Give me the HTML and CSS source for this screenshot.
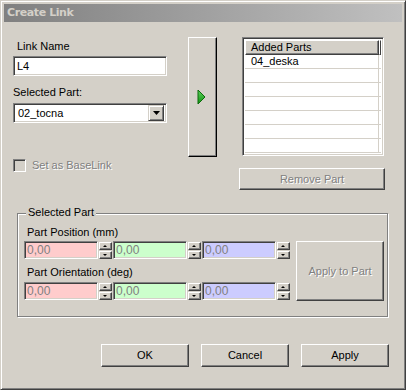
FILE: index.html
```html
<!DOCTYPE html>
<html>
<head>
  <meta charset="UTF-8">
  <title>Create Link</title>
  <link rel="stylesheet" href="styles.css">
</head>
<body>
  <div class="window">
    <div class="titlebar">Create Link</div>

    <div class="client">
      <!-- Link name, part picker, add button and list -->
      <div class="top">
        <div class="left-col">
          <div class="lbl name-lbl">Link Name</div>
          <div class="edit">L4</div>
          <div class="lbl part-lbl">Selected Part:</div>
          <div class="combo">
            <span class="combo-text">02_tocna</span>
            <span class="combo-btn">
              <svg width="7" height="4" viewBox="0 0 7 4"><polygon points="0,0 7,0 3.5,4" fill="#000"/></svg>
            </span>
          </div>
        </div>

        <button class="btn add-btn">
          <svg width="9" height="16" viewBox="0 0 9 16">
            <defs>
              <linearGradient id="g" x1="0" y1="0" x2="0" y2="1">
                <stop offset="0" stop-color="#5ed45e"/>
                <stop offset="1" stop-color="#109010"/>
              </linearGradient>
            </defs>
            <polygon points="1,1 8,8 1,15" fill="url(#g)" stroke="#0a6a0a" stroke-width="1"/>
          </svg>
        </button>

        <div class="list">
          <div class="list-head">
            <span class="head-cell">Added Parts</span>
            <span class="head-stub"></span>
          </div>
          <div class="row"><span class="cell">04_deska</span><span class="cell-end"></span></div>
          <div class="row"><span class="cell"></span><span class="cell-end"></span></div>
          <div class="row"><span class="cell"></span><span class="cell-end"></span></div>
          <div class="row"><span class="cell"></span><span class="cell-end"></span></div>
          <div class="row"><span class="cell"></span><span class="cell-end"></span></div>
          <div class="row"><span class="cell"></span><span class="cell-end"></span></div>
          <div class="row"><span class="cell"></span><span class="cell-end"></span></div>
        </div>
      </div>

      <!-- Base link checkbox and remove button -->
      <div class="mid">
        <div class="check">
          <span class="check-box"></span>
          <span class="disabled">Set as BaseLink</span>
        </div>
        <button class="btn remove-btn disabled">Remove Part</button>
      </div>

      <!-- Selected part group -->
      <div class="group">
        <div class="legend">Selected Part</div>
        <div class="group-grid">
          <div class="lbl pos-lbl">Part Position (mm)</div>
          <div class="fields pos-fields">
            <span class="num pink">0,00</span><span class="spin"><span class="up"></span><span class="down"></span></span>
            <span class="num green">0,00</span><span class="spin"><span class="up"></span><span class="down"></span></span>
            <span class="num blue">0,00</span><span class="spin"><span class="up"></span><span class="down"></span></span>
          </div>
          <div class="lbl ori-lbl">Part Orientation (deg)</div>
          <div class="fields ori-fields">
            <span class="num pink">0,00</span><span class="spin"><span class="up"></span><span class="down"></span></span>
            <span class="num green">0,00</span><span class="spin"><span class="up"></span><span class="down"></span></span>
            <span class="num blue">0,00</span><span class="spin"><span class="up"></span><span class="down"></span></span>
          </div>
          <button class="btn apply-part disabled">Apply to Part</button>
        </div>
      </div>

      <!-- Dialog buttons -->
      <div class="footer">
        <button class="btn">OK</button>
        <button class="btn">Cancel</button>
        <button class="btn">Apply</button>
      </div>
    </div>
  </div>
</body>
</html>
```

FILE: styles.css
```css
/* Base styles */
* {
  margin: 0;
  padding: 0;
  box-sizing: border-box;
}

body {
  width: 406px;
  height: 390px;
  overflow: hidden;
  background: #d4d0c8;
  font: 11px/13px "Liberation Sans", Arial, sans-serif;
  color: #000;
}

/* Window frame */
.window {
  width: 406px;
  height: 390px;
  display: flex;
  flex-direction: column;
  padding: 3px;
  border: 1px solid;
  border-color: #d4d0c8 #404040 #404040 #d4d0c8;
  box-shadow: inset 1px 1px #fff, inset -1px -1px #808080;
}

.titlebar {
  height: 18px;
  padding-left: 3px;
  background: linear-gradient(to right, #808080, #c0c0c0);
  color: #d4d0c8;
  font: bold 11px/18px "DejaVu Sans", Verdana, sans-serif;
  letter-spacing: -0.4px;
}

.client {
  flex: 1;
  display: flex;
  flex-direction: column;
}

/* Win classic 3D borders */
.btn {
  display: flex;
  align-items: center;
  justify-content: center;
  background: #d4d0c8;
  font: inherit;
  color: #000;
  border: 1px solid;
  border-color: #fff #404040 #404040 #fff;
  box-shadow: inset -1px -1px #808080;
}

.edit,
.combo,
.list,
.num {
  border: 1px solid;
  border-color: #808080 #fff #fff #808080;
  box-shadow: inset 1px 1px #404040, inset -1px -1px #d4d0c8;
}

.disabled {
  color: #808080;
  text-shadow: 1px 1px #fff;
}

/* Top section */
.top {
  display: flex;
  align-items: flex-start;
  margin-top: 15px;
}

.left-col {
  display: flex;
  flex-direction: column;
  width: 154px;
  margin-left: 9px;
}

.name-lbl {
  margin-top: 3px;
  padding-left: 4px;
}

.edit {
  height: 20px;
  margin-top: 3px;
  padding-left: 3px;
  background: #fff;
  line-height: 18px;
}

.part-lbl {
  margin-top: 10px;
}

.combo {
  display: flex;
  align-items: center;
  height: 20px;
  margin-top: 4px;
  padding: 2px;
  background: #fff;
}

.combo-text {
  flex: 1;
  padding-left: 2px;
}

.combo-btn {
  display: flex;
  align-items: center;
  justify-content: center;
  width: 16px;
  height: 16px;
  background: #d4d0c8;
  border: 1px solid;
  border-color: #d4d0c8 #404040 #404040 #d4d0c8;
  box-shadow: inset 1px 1px #fff, inset -1px -1px #808080;
}

.add-btn {
  width: 29px;
  height: 120px;
  margin-left: 21px;
  border-color: #fff #000 #000 #fff;
}

.add-btn svg {
  margin-left: -2px;
}

/* Added parts list */
.list {
  width: 142px;
  height: 119px;
  margin-left: 25px;
  padding: 2px;
  background: #fff;
  overflow: hidden;
}

.list-head {
  display: flex;
  height: 15px;
}

.head-cell,
.head-stub {
  background: #d4d0c8;
  border: 1px solid;
  border-color: #fff #404040 #404040 #fff;
  box-shadow: inset -1px -1px #808080;
  line-height: 12px;
}

.head-cell {
  width: 134px;
  padding-left: 5px;
}

.head-stub {
  flex: 1;
}

.row {
  display: flex;
  height: 14px;
  border-bottom: 1px solid #d4d0c8;
}

.cell {
  width: 134px;
  padding-left: 6px;
  border-right: 1px solid #d4d0c8;
}

/* Checkbox and remove */
.mid {
  display: flex;
  align-items: flex-start;
  height: 33px;
}

.check {
  display: flex;
  align-items: center;
  gap: 6px;
  margin: 2px 0 0 9px;
}

.check-box {
  width: 13px;
  height: 13px;
  background: #d4d0c8;
  border: 1px solid;
  border-color: #808080 #fff #fff #808080;
  box-shadow: inset 1px 1px #404040, inset -1px -1px #d4d0c8;
}

.remove-btn {
  width: 146px;
  height: 22px;
  margin: 11px 17px 0 auto;
}

/* Group box */
.group {
  width: 371px;
  height: 104px;
  margin: 23px 0 0 13px;
  border: 1px solid #808080;
  box-shadow: inset 1px 1px #fff, 1px 1px #fff;
}

.legend {
  width: fit-content;
  margin: -8px 0 0 8px;
  padding: 0 2px;
  background: #d4d0c8;
}

.group-grid {
  display: grid;
  grid-template-columns: 266px 88px;
  grid-template-rows: 15px 18px 23px 18px;
  column-gap: 6px;
  margin-top: 7px;
  padding-left: 6px;
}

.pos-lbl { grid-area: 1 / 1; }
.pos-fields { grid-area: 2 / 1; }
.ori-lbl { grid-area: 3 / 1; }
.ori-fields { grid-area: 4 / 1; }

.group-grid .lbl {
  padding-left: 3px;
}

.ori-lbl {
  align-self: end;
  margin-bottom: 3px;
}

.fields {
  display: flex;
  gap: 1px;
}

.num {
  width: 74px;
  height: 18px;
  padding-left: 2px;
  color: #808080;
  font-size: 12px;
  line-height: 16px;
}

.pink { background: #ffcccc; }
.green { background: #ccffcc; }
.blue { background: #ccccff; }

.spin {
  display: flex;
  flex-direction: column;
  justify-content: space-between;
  width: 13px;
  height: 18px;
  padding-top: 1px;
}

.up,
.down {
  position: relative;
  height: 8px;
  background: #d4d0c8;
  border: 1px solid;
  border-color: #fff #404040 #404040 #fff;
  box-shadow: inset -1px -1px #808080;
}

/* tiny arrow glyph on the spinner halves */
.up::after,
.down::after {
  content: "";
  position: absolute;
  left: 3px;
  border-left: 2px solid transparent;
  border-right: 2px solid transparent;
}

.up::after {
  top: 2px;
  border-bottom: 2px solid #000;
}

.down::after {
  top: 2px;
  border-top: 2px solid #000;
}

.apply-part {
  grid-column: 2;
  grid-row: 2 / 5;
  height: 60px;
}

/* Dialog buttons */
.footer {
  display: flex;
  gap: 12px;
  margin: 27px 0 0 97px;
}

.footer .btn {
  width: 88px;
  height: 23px;
}
```
